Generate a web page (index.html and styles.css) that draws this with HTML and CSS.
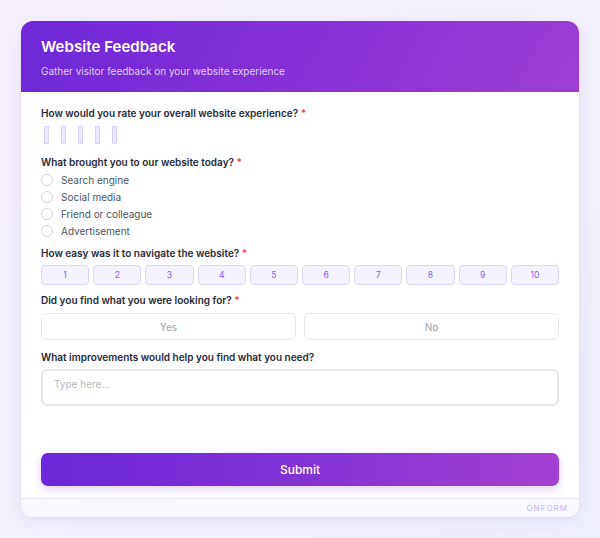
FILE: index.html
```html
<!DOCTYPE html>
<html lang="en">
<head>
<meta charset="utf-8">
<title>Website Feedback</title>
<link rel="stylesheet" href="styles.css">
</head>
<body>
<div class="page">
  <div class="card">
    <div class="header">
      <div class="title">Website Feedback</div>
      <div class="subtitle">Gather visitor feedback on your website experience</div>
    </div>
    <div class="body">
      <div class="field f-stars">
        <div class="label">How would you rate your overall website experience? <span class="req">*</span></div>
        <div class="stars">
          <span class="star"></span><span class="star"></span><span class="star"></span><span class="star"></span><span class="star"></span>
        </div>
      </div>
      <div class="field f-radio">
        <div class="label">What brought you to our website today? <span class="req">*</span></div>
        <div class="options">
          <div class="option"><span class="radio"></span>Search engine</div>
          <div class="option"><span class="radio"></span>Social media</div>
          <div class="option"><span class="radio"></span>Friend or colleague</div>
          <div class="option"><span class="radio"></span>Advertisement</div>
        </div>
      </div>
      <div class="field f-scale">
        <div class="label">How easy was it to navigate the website? <span class="req">*</span></div>
        <div class="scale">
          <span class="num">1</span><span class="num">2</span><span class="num">3</span><span class="num">4</span><span class="num">5</span><span class="num">6</span><span class="num">7</span><span class="num">8</span><span class="num">9</span><span class="num">10</span>
        </div>
      </div>
      <div class="field f-yesno">
        <div class="label">Did you find what you were looking for? <span class="req">*</span></div>
        <div class="yesno">
          <span class="choice">Yes</span><span class="choice">No</span>
        </div>
      </div>
      <div class="field f-text">
        <div class="label">What improvements would help you find what you need?</div>
        <div class="textarea">Type here...</div>
      </div>
      <div class="submit">Submit</div>
    </div>
    <div class="footer">ONFORM</div>
  </div>
</div>
</body>
</html>
```
FILE: styles.css
```css
* { box-sizing: border-box; }
html, body { margin: 0; padding: 0; }
body {
  width: 600px;
  height: 538px;
  overflow: hidden;
  font-family: Inter, "Noto Sans", sans-serif;
  background: linear-gradient(135deg, #f6f0fc 0%, #f3f1fc 50%, #eef0fb 100%);
}
.page {
  padding: 21px 21px 0 21px;
}
.card {
  width: 558px;
  height: 496px;
  background: #ffffff;
  border-radius: 12px;
  overflow: hidden;
  display: flex;
  flex-direction: column;
  box-shadow: 0 4px 18px rgba(120, 90, 220, 0.10), 0 1px 3px rgba(120, 90, 220, 0.06);
}
.header {
  height: 71px;
  padding: 16px 20px 0 20px;
  background: linear-gradient(120deg, #6d28d9 0%, #8b32d4 60%, #9e3fd3 100%);
  color: #fff;
}
.title {
  font-size: 15px;
  font-weight: 600;
  line-height: 19px;
  letter-spacing: 0.05px;
}
.subtitle {
  margin-top: 8px;
  font-size: 10px;
  line-height: 14px;
  color: rgba(255, 255, 255, 0.78);
}
.body {
  flex: 1;
  padding: 13px 20px 0 20px;
  display: flex;
  flex-direction: column;
}
.label {
  font-size: 10px;
  font-weight: 600;
  line-height: 16px;
  color: #1f2937;
}
.req { color: #ef4444; }
.stars {
  margin-top: 5px;
  padding-left: 3px;
  display: flex;
  gap: 12px;
  height: 18px;
}
.star {
  width: 5px;
  height: 18px;
  border: 1px solid #d6cffc;
  background: #ece8fe;
  border-radius: 1px;
}
.f-radio { margin-top: 10px; }
.options { margin-top: 1.5px; }
.option {
  height: 17px;
  display: flex;
  align-items: center;
  font-size: 10px;
  color: #4b5563;
}
.radio {
  width: 12px;
  height: 12px;
  border: 1px solid #d1d5db;
  border-radius: 50%;
  margin-right: 8px;
  background: #fff;
}
.f-scale { margin-top: 5.5px; }
.scale {
  margin-top: 4px;
  display: grid;
  grid-template-columns: repeat(10, 1fr);
  gap: 4px;
}
.num {
  height: 20px;
  border: 1px solid #ddd6fe;
  background: #f5f3ff;
  border-radius: 4px;
  color: #8b5cf6;
  font-size: 8.5px;
  display: flex;
  align-items: center;
  justify-content: center;
}
.f-yesno { margin-top: 7px; }
.yesno {
  margin-top: 5px;
  display: grid;
  grid-template-columns: 1fr 1fr;
  gap: 8px;
}
.choice {
  height: 27px;
  border: 1.5px solid #e5e7eb;
  border-radius: 6px;
  color: #9ca3af;
  font-size: 10px;
  display: flex;
  align-items: center;
  justify-content: center;
}
.f-text { margin-top: 9px; }
.textarea {
  margin-top: 4px;
  height: 37px;
  border: 2px solid #e5e7eb;
  border-radius: 6px;
  padding: 6px 11px;
  font-size: 10px;
  line-height: 14px;
  color: #b4b8c0;
}
.submit {
  margin-top: 47px;
  height: 33px;
  border-radius: 7px;
  background: linear-gradient(90deg, #6b27d8 0%, #8533d4 55%, #a43fcf 100%);
  color: #fff;
  font-size: 12px;
  font-weight: 500;
  display: flex;
  align-items: center;
  justify-content: center;
  box-shadow: 0 3px 10px rgba(140, 70, 220, 0.25);
}
.footer {
  height: 19px;
  border-top: 1px solid #ebe6f3;
  background: #faf8ff;
  text-align: right;
  padding-right: 11px;
  font-size: 8px;
  line-height: 18px;
  letter-spacing: 1px;
  font-weight: 500;
  color: #c9bcfb;
}
```
